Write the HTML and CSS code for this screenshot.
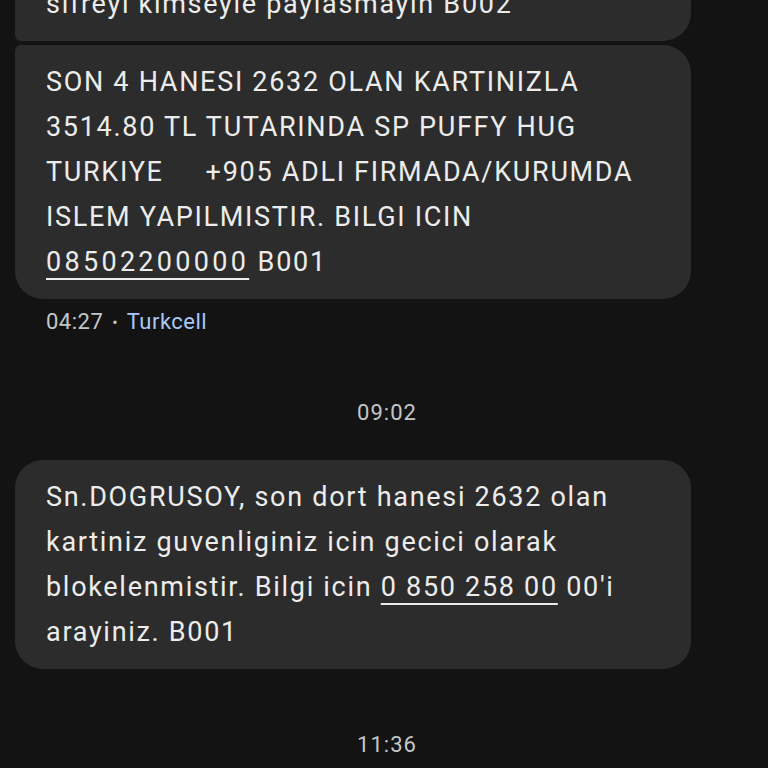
FILE: index.html
```html
<!DOCTYPE html>
<html>
<head>
  <title>Mesajlar</title>
  <link rel="stylesheet" href="styles.css">
</head>
<body>
  <div class="thread">
    <div class="bubble first">sifreyi kimseyle paylasmayin B002</div>
    <div class="bubble last">SON 4 HANESI 2632 OLAN KARTINIZLA<br>3514.80 TL TUTARINDA SP PUFFY HUG<br>TURKIYE&nbsp;&nbsp;&nbsp;&nbsp;&nbsp;+905 ADLI FIRMADA/KURUMDA<br>ISLEM YAPILMISTIR. BILGI ICIN<br><span class="link wide">08502200000</span> B001</div>
    <div class="meta">04:27 <span class="dot">&bull;</span> <span class="sim">Turkcell</span></div>

    <div class="stamp">09:02</div>

    <div class="bubble">Sn.DOGRUSOY, son dort hanesi 2632 olan<br>kartiniz guvenliginiz icin gecici olarak<br>blokelenmistir. Bilgi icin <span class="link">0 850 258 00</span> 00'i<br>arayiniz. B001</div>

    <div class="stamp bottom">11:36</div>
  </div>
</body>
</html>
```

FILE: styles.css
```css
body {
  margin: 0;
  background-color: #131313;
  font-family: Roboto, "Noto Sans", sans-serif;
  height: 768px;
  overflow: hidden;
}

.thread {
  display: flex;
  flex-direction: column;
  padding: 0 77px 0 15px;
  margin-top: -33px;
}

.bubble {
  background-color: #2c2c2c;
  color: #ececec;
  font-size: 27px;
  letter-spacing: 1.7px;
  line-height: 45px;
  padding: 14.5px 31px;
  border-radius: 28px;
  white-space: nowrap;
}

.bubble.first {
  border-bottom-left-radius: 6px;
  margin-bottom: 4px;
}

.bubble.last {
  border-top-left-radius: 6px;
}

.link {
  text-decoration: underline;
  text-decoration-thickness: 2px;
  text-underline-offset: 7px;
}

.link.wide {
  letter-spacing: 3.3px;
}

.meta {
  margin-top: 10px;
  padding-left: 31px;
  font-size: 22px;
  letter-spacing: 0.5px;
  line-height: 26px;
  color: #c4c7c5;
}

.meta .dot {
  font-size: 16px;
  margin: 0 3px;
  vertical-align: 1px;
}

.meta .sim {
  color: #a8c7fa;
}

.stamp {
  text-align: center;
  font-size: 22px;
  letter-spacing: 1px;
  line-height: 26px;
  color: #c4c7c5;
  margin: 64px -77px 34px -9px;
}

.stamp.bottom {
  margin: 63px -77px 0 -9px;
}
```
